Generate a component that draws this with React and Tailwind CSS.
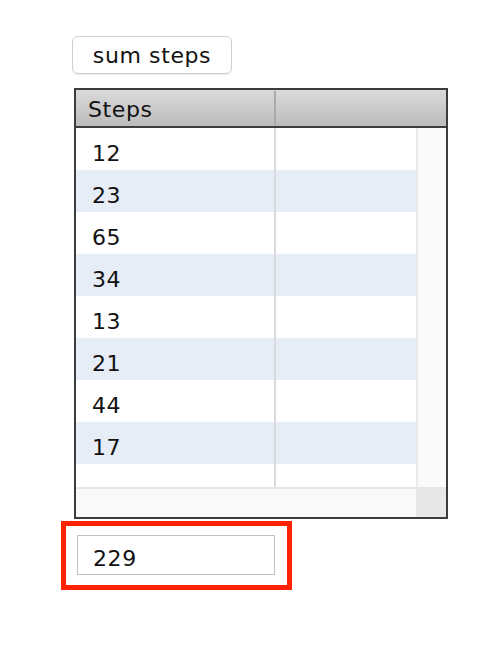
import React from 'react'

const steps = [12, 23, 65, 34, 13, 21, 44, 17]

function App() {
  return (
    <div
      className="min-h-screen bg-white text-[#111] pt-[36px] text-[22px] tracking-[0.6px]"
      style={{ fontFamily: '"DejaVu Sans", "Liberation Sans", sans-serif' }}
    >
      {/* Button */}
      <button className="ml-[72px] w-[160px] h-[38px] rounded-[6px] border border-[#cfcfcf] bg-white shadow-[0_1px_1px_rgba(0,0,0,0.08)] leading-[36px] pt-[1px] text-[#111]">
        sum steps
      </button>

      {/* Table */}
      <div className="ml-[74px] mt-[14px] w-[374px] h-[431px] border-2 border-[#3c3c3c] flex flex-col">
        {/* Header */}
        <div className="h-[38px] flex bg-gradient-to-b from-[#dadada] to-[#bcbcbc] border-b-2 border-[#3c3c3c]">
          <div className="w-[198px] pl-[12px] pt-[4px] leading-[32px]">
            Steps
          </div>
          <div className="w-[2px] mt-[1px] bg-[#aaaaaa]" />
          <div className="flex-1" />
        </div>

        {/* Body */}
        <div className="h-[359px] flex">
          <div className="w-[340px] flex flex-col bg-white">
            {steps.map((s, i) => (
              <div
                key={i}
                className={`h-[42px] flex ${i % 2 === 1 ? 'bg-[#e6edf7]' : 'bg-white'}`}
              >
                <div className="w-[198px] pl-[16px] pt-[9px] leading-[33px]">
                  {s}
                </div>
                <div className="w-[2px] bg-[#dadada]" />
                <div className="flex-1" />
              </div>
            ))}
            <div className="flex-1 flex">
              <div className="w-[198px]" />
              <div className="w-[2px] bg-[#dadada]" />
              <div className="flex-1" />
            </div>
          </div>
          {/* Vertical scrollbar */}
          <div className="flex-1 bg-[#fafafa] border-l-2 border-[#ebebeb]" />
        </div>

        {/* Horizontal scrollbar */}
        <div className="flex-1 flex border-t-2 border-[#e6e6e6]">
          <div className="w-[340px] bg-[#f9f9f9]" />
          <div className="flex-1 bg-[#e8e8e8]" />
        </div>
      </div>

      {/* Result box */}
      <div className="ml-[61px] mt-[2px] w-[231px] h-[69px] border-[5px] border-[#ff2200] pl-[11px] pt-[9px]">
        <div className="w-[198px] h-[40px] border border-[#c0c0c0] bg-white pl-[15px] pt-[7px] leading-[31px]">
          229
        </div>
      </div>
    </div>
  )
}

export default App
